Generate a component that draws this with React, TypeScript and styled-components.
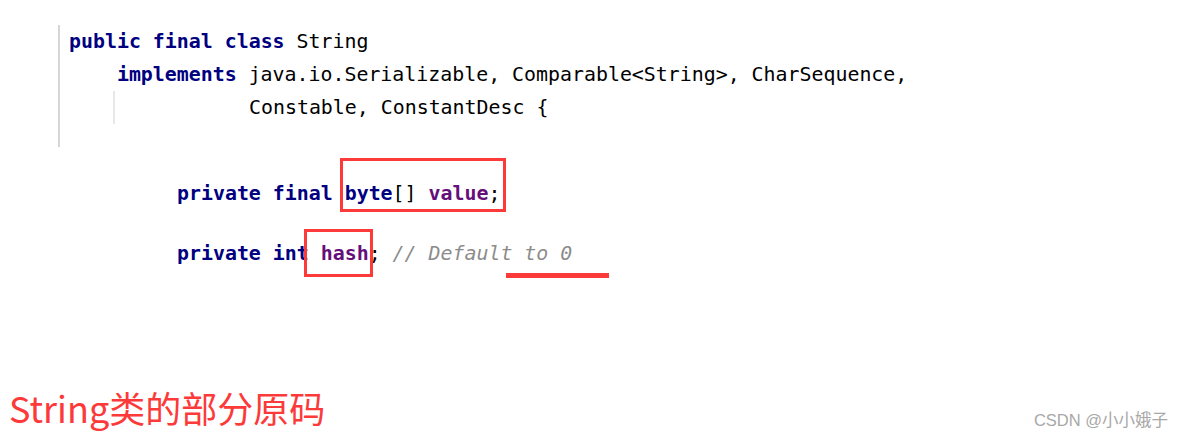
import React from "react";
import styled, { createGlobalStyle } from "styled-components";

const Global = createGlobalStyle`
  html, body { margin: 0; padding: 0; background: #ffffff; }
  #root { width: 1184px; height: 438px; overflow: hidden; }
`;

const Page = styled.div`
  position: relative;
  width: 1184px;
  height: 438px;
  display: flex;
  flex-direction: column;
  box-sizing: border-box;
  padding-top: 26px;
`;

const Code = styled.div`
  font-family: "DejaVu Sans Mono", "Liberation Mono", monospace;
  font-size: 19.9px;
  color: #000000;
  white-space: pre;
`;

const ClassDecl = styled(Code)`
  margin-left: 58px;
  border-left: 2px solid #d6d6d6;
  padding-left: 9px;
  padding-bottom: 23px;
  margin-top: -1px;
`;

const Line = styled.div<{ $indent?: number }>`
  height: 33px;
  line-height: 33px;
  padding-left: ${(p) => (p.$indent ?? 0) * 11.98}px;
`;

const GuidedLine = styled.div`
  height: 33px;
  line-height: 33px;
  margin-left: 44px;
  border-left: 2px solid #e8e8e8;
  padding-left: 134px;
`;

const Fields = styled(Code)`
  margin-top: 30px;
  margin-left: 177px;
  display: flex;
  flex-direction: column;
  gap: 27px;
`;

const Kw = styled.span`
  color: #000080;
  font-weight: bold;
`;

const Field = styled.span`
  color: #660e7a;
  font-weight: bold;
`;

const Comment = styled.span`
  color: #8c8c8c;
  font-style: italic;
`;

const Marked = styled.span`
  position: relative;
`;

const Box = styled.span<{ $l: number; $t: number; $w: number; $h: number }>`
  position: absolute;
  left: ${(p) => p.$l}px;
  top: ${(p) => p.$t}px;
  width: ${(p) => p.$w}px;
  height: ${(p) => p.$h}px;
  border: 3px solid #fc3a3a;
  box-sizing: border-box;
  pointer-events: none;
`;

const Underline = styled.span<{ $l: number; $t: number; $w: number }>`
  position: absolute;
  left: ${(p) => p.$l}px;
  top: ${(p) => p.$t}px;
  width: ${(p) => p.$w}px;
  height: 5px;
  background: #fc3a3a;
`;

const Footer = styled.div`
  margin-top: auto;
  display: flex;
  justify-content: space-between;
  align-items: flex-end;
  padding: 0 16px 8px 9px;
`;

const Caption = styled.div`
  font-family: "Noto Sans CJK SC", "Noto Sans", sans-serif;
  font-size: 36px;
  line-height: 46px;
  color: #fc3a3a;
`;

const Watermark = styled.div`
  font-family: "Liberation Sans", "Noto Sans CJK SC", sans-serif;
  font-size: 16.5px;
  line-height: 20px;
  color: #a8a8a8;
`;

export default function App() {
  return (
    <>
      <Global />
      <Page>
        <ClassDecl>
          <Line>
            <Kw>public</Kw> <Kw>final</Kw> <Kw>class</Kw> String
          </Line>
          <Line $indent={4}>
            <Kw>implements</Kw> java.io.Serializable, Comparable&lt;String&gt;, CharSequence,
          </Line>
          <GuidedLine>Constable, ConstantDesc {"{"}</GuidedLine>
        </ClassDecl>
        <Fields>
          <Line>
            <Kw>private</Kw> <Kw>final</Kw>{" "}
            <Marked>
              <Kw>byte</Kw>[] <Field>value</Field>;
              <Box $l={-5} $t={-24} $w={166} $h={54} />
            </Marked>
          </Line>
          <Line>
            <Kw>private</Kw> <Kw>int</Kw>{" "}
            <Marked>
              <Field>hash</Field>
              <Box $l={-17} $t={-13} $w={69} $h={48} />
            </Marked>
            ;{" "}
            <Marked>
              <Comment>// Default to 0</Comment>
              <Underline $l={113} $t={31} $w={103} />
            </Marked>
          </Line>
        </Fields>
        <Footer>
          <Caption>String类的部分原码</Caption>
          <Watermark>CSDN @小小娥子</Watermark>
        </Footer>
      </Page>
    </>
  );
}
